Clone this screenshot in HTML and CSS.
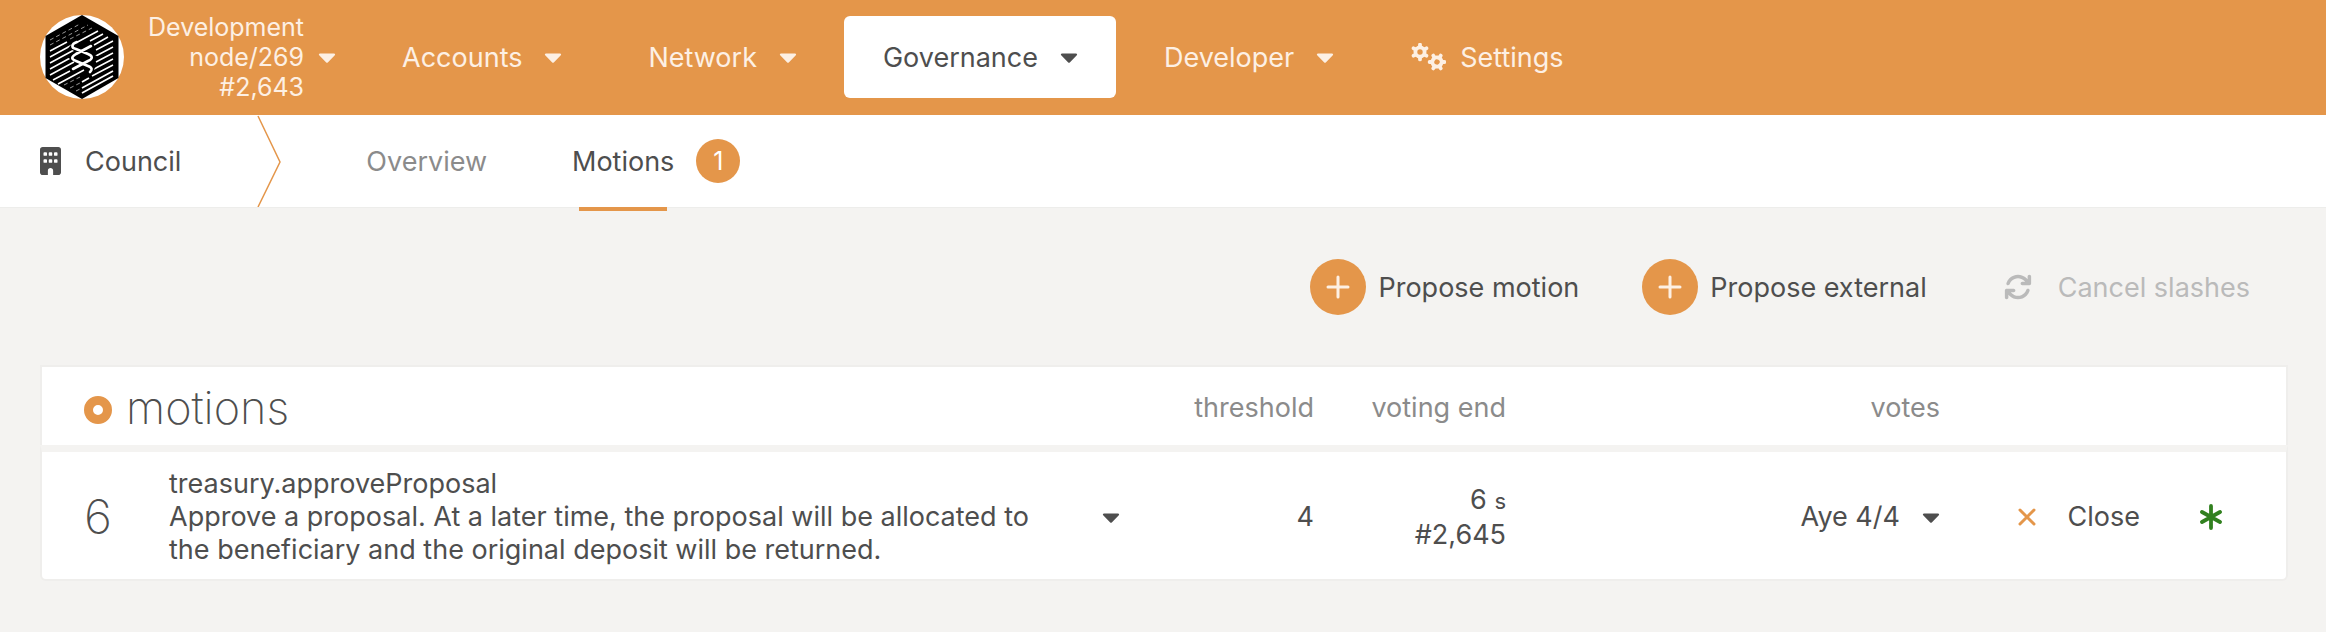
FILE: index.html
```html
<!DOCTYPE html>
<html lang="en">
<head>
<meta charset="utf-8">
<meta name="viewport" content="width=device-width, initial-scale=1">
<title>Council motions</title>
<link rel="stylesheet" href="styles.css">
</head>
<body>
<svg class="defs" aria-hidden="true">
  <symbol id="caret" viewBox="0 0 320 512"><path d="M31.3 192h257.3c17.8 0 26.7 21.5 14.1 34.1L174.1 354.8c-7.8 7.8-20.5 7.8-28.3 0L17.2 226.1C4.6 213.5 13.5 192 31.3 192z"/></symbol>
  <symbol id="plus" viewBox="0 0 24 24"><path d="M12 2v20M2 12h20" fill="none" stroke="currentColor" stroke-width="3" stroke-linecap="round"/></symbol>
</svg>
<header class="topbar">
  <svg class="logo" viewBox="0 0 84 84" role="img" aria-label="Substrate">
    <circle cx="42" cy="42" r="42" fill="#fff"/>
    <path d="M42 0L78.500 21V63L42 84L5.500 63V21z" fill="#000"/>
    <g stroke="#fff" fill="none">
      <path stroke-width="1" stroke-dasharray="4 3" stroke="#999" d="M10 25L40 9M10 30L48 10M30 24L52 13M24 70L40 62M30 73L42 67M36 76L42 73"/>
      <path stroke-width="1.500" d="M32 30L58 16M10 36L27 27M50 26L63 19M10 42L32 30M54 30L68 22M10 48L34 35M56 35L73 26M10 54L32 42M54 42L73 32M10 60L34 47M56 47L73 38M13 65L30 56M54 54L73 44M18 69L44 55M52 61L73 50"/>
      <path stroke-width="1.800" d="M42 67L49 63M42 73L73 56M42 78L73 61"/>
      <path stroke="#000" stroke-width="6" d="M37 27L33 32L52 42L33 53M51 31L33 42L52 52L49 57"/>
      <path stroke-width="2.600" stroke-linecap="round" stroke-linejoin="round" d="M37 27C31 29 31 33 36 34L48 39C53 41 53 44 48 46L33 54M51 31L36 39C31 42 31 44 36 46L48 51C53 53 52 55 50 57"/>
    </g>
  </svg>
  <button class="chain" type="button">
    <span class="chain-text">Development<br>node/269<br>#2,643</span>
    <svg class="caret"><use href="#caret"/></svg>
  </button>
  <nav class="menu">
    <button type="button" class="menu-item">Accounts <svg class="caret"><use href="#caret"/></svg></button>
    <button type="button" class="menu-item">Network <svg class="caret"><use href="#caret"/></svg></button>
    <button type="button" class="menu-item active">Governance <svg class="caret"><use href="#caret"/></svg></button>
    <button type="button" class="menu-item">Developer <svg class="caret"><use href="#caret"/></svg></button>
    <a href="#settings" class="menu-item settings">
      <svg class="gears" viewBox="0 0 35 28">
        <g id="gear" transform="translate(9 9)">
          <path fill-rule="evenodd" d="M-6.500 0a6.500 6.500 0 1 0 13 0a6.500 6.500 0 1 0 -13 0zM-2.700 0a2.700 2.700 0 1 0 5.400 0a2.700 2.700 0 1 0 -5.400 0z"/>
          <path d="M0 -5.500V-7.400M0 5.500V7.400M4.800 -2.800L6.400 -3.700M-4.800 2.800L-6.400 3.700M4.800 2.800L6.400 3.700M-4.800 -2.800L-6.400 -3.700" fill="none" stroke="currentColor" stroke-width="3.800" stroke-linecap="round"/>
        </g>
        <use href="#gear" transform="translate(26 19) rotate(30) translate(-9 -9)"/>
      </svg>
      Settings
    </a>
  </nav>
</header>
<nav class="tabs">
  <div class="section">
    <svg class="building" viewBox="0 0 384 512"><path fill-rule="evenodd" d="M48 0C21.500 0 0 21.500 0 48V464c0 26.500 21.500 48 48 48h96V432c0-26.500 21.500-48 48-48s48 21.500 48 48v80h96c26.500 0 48-21.500 48-48V48c0-26.500-21.500-48-48-48zM64 112q0-16 16-16h32q16 0 16 16v32q0 16-16 16h-32q-16 0-16-16zM160 112q0-16 16-16h32q16 0 16 16v32q0 16-16 16h-32q-16 0-16-16zM256 112q0-16 16-16h32q16 0 16 16v32q0 16-16 16h-32q-16 0-16-16zM64 240q0-16 16-16h32q16 0 16 16v32q0 16-16 16h-32q-16 0-16-16zM160 240q0-16 16-16h32q16 0 16 16v32q0 16-16 16h-32q-16 0-16-16zM256 240q0-16 16-16h32q16 0 16 16v32q0 16-16 16h-32q-16 0-16-16z"/></svg>
    Council
  </div>
  <svg class="divider" viewBox="0 0 24 92"><path d="M1 1L23 47L1 92" fill="none" stroke="#e4964a" stroke-width="1.500"/></svg>
  <a class="tab" href="#overview">Overview</a>
  <a class="tab current" href="#motions"><span>Motions</span><span class="badge">1</span></a>
</nav>
<main class="page">
  <div class="actions">
    <button type="button" class="action"><span class="disc"><svg class="plus"><use href="#plus"/></svg></span>Propose motion</button>
    <button type="button" class="action"><span class="disc"><svg class="plus"><use href="#plus"/></svg></span>Propose external</button>
    <button type="button" class="action off" disabled><svg class="sync" viewBox="0 0 512 512"><path d="M105.1 202.6c7.7-21.8 20.2-42.3 37.8-59.8c62.5-62.5 163.8-62.5 226.3 0L386.3 160H336c-17.7 0-32 14.3-32 32s14.3 32 32 32H463.9c17.7 0 32-14.3 32-32V64c0-17.7-14.3-32-32-32s-32 14.3-32 32v51.2L414.4 97.6c-87.5-87.5-229.3-87.5-316.8 0C73.2 122 55.6 150.7 44.8 181.4c-5.9 16.7 2.9 34.9 19.5 40.8s34.9-2.9 40.8-19.5zM39 289.3c-5 1.5-9.8 4.2-13.7 8.2c-4 4-6.7 8.8-8.1 14c-.3 1.2-.6 2.500-.8 3.800c-.3 1.700-.4 3.400-.4 5.100V448c0 17.700 14.300 32 32 32s32-14.300 32-32V396.900l17.600 17.500c87.500 87.400 229.300 87.400 316.700 0c24.400-24.400 42.100-53.100 52.900-83.700c5.900-16.700-2.900-34.900-19.500-40.800s-34.900 2.900-40.800 19.500c-7.700 21.800-20.200 42.300-37.800 59.800c-62.500 62.500-163.800 62.500-226.300 0L125.600 352H176c17.700 0 32-14.300 32-32s-14.300-32-32-32H48.400c-1.600 0-3.200 .1-4.800 .3s-3.100 .5-4.600 1z"/></svg>Cancel slashes</button>
  </div>
  <table class="motions">
    <colgroup><col class="c-id"><col class="c-text"><col class="c-threshold"><col class="c-end"><col class="c-votes"><col class="c-close"><col class="c-state"></colgroup>
    <thead>
      <tr>
        <th colspan="2" class="title" scope="col"><h1><span class="ring"></span>motions</h1></th>
        <th scope="col">threshold</th>
        <th scope="col">voting end</th>
        <th scope="col">votes</th>
        <td colspan="2"></td>
      </tr>
    </thead>
    <tbody>
      <tr>
        <td class="id">6</td>
        <td class="call">
          <details><summary><span>treasury.approveProposal<br>Approve a proposal. At a later time, the proposal will be allocated to the beneficiary and the original deposit will be returned.</span><svg class="caret"><use href="#caret"/></svg></summary></details>
        </td>
        <td>4</td>
        <td>6 <small>s</small><br>#2,645</td>
        <td><button type="button" class="votes">Aye 4/4 <svg class="caret"><use href="#caret"/></svg></button></td>
        <td><button type="button" class="close"><svg class="cross" viewBox="0 0 18 18"><path d="M2 2L16 16M16 2L2 16" fill="none" stroke="#e4964a" stroke-width="3" stroke-linecap="round"/></svg>Close</button></td>
        <td class="state"><svg class="star" viewBox="0 0 22 26"><path d="M11 2V24M2 8L20 18M20 8L2 18" fill="none" stroke="#31801f" stroke-width="3.800" stroke-linecap="round"/></svg></td>
      </tr>
    </tbody>
  </table>
</main>
</body>
</html>
```
FILE: styles.css
```css
* { box-sizing: border-box; }
body {
  margin: 0;
  background: #f4f3f1;
  color: #4e4e4e;
  font: 27px/33px Inter, "Noto Sans", sans-serif;
}
button {
  border: 0;
  padding: 0;
  background: none;
  color: inherit;
  font: inherit;
}
a { color: inherit; text-decoration: none; }
svg { fill: currentColor; flex: none; }
.defs { display: none; }
.caret { width: 18px; height: 28px; }

.topbar {
  display: flex;
  align-items: center;
  min-height: 115px;
  padding: 0 40px 1px;
  background: #e4964a;
  color: #fdf0e4;
}
.logo { width: 84px; height: 84px; }
.chain {
  display: flex;
  align-items: center;
  gap: 14px;
  margin-left: 24px;
  text-align: right;
  font-size: 25px;
  line-height: 30px;
}
.menu { display: flex; align-items: center; margin-left: 27px; }
.menu-item {
  display: flex;
  align-items: center;
  gap: 22px;
  height: 82px;
  padding: 0 38px 0 39px;
  border-radius: 6px;
  margin-right: 9px;
}
.menu-item.active { background: #fff; color: #4e4e4e; }
.menu .settings { gap: 14px; padding-left: 30px; }
.gears { width: 35px; height: 28px; }

.tabs {
  display: flex;
  min-height: 93px;
  padding: 0 40px;
  background: #fff;
  border-bottom: 1px solid #ededeb;
}
.section { display: flex; align-items: center; gap: 24px; }
.building { width: 21px; height: 28px; }
.divider { width: 24px; height: 92px; margin-left: 76px; }
.tab { display: flex; align-items: center; margin-left: 85px; color: #8b8b8b; }
.current { position: relative; gap: 22px; color: #4e4e4e; }
.current::after {
  content: "";
  position: absolute;
  left: 7px;
  bottom: -4px;
  width: 88px;
  height: 4px;
  background: #e4964a;
}
.badge {
  width: 44px;
  height: 44px;
  border-radius: 50%;
  background: #e4964a;
  color: #fff;
  font-size: 25px;
  line-height: 44px;
  text-align: center;
}

.page { padding: 51px 38px 40px 40px; }
.actions { display: flex; justify-content: flex-end; gap: 63px; padding-right: 38px; }
.action { display: flex; align-items: center; gap: 12px; }
.off { gap: 26px; padding-left: 14px; color: #bababa; }
.disc {
  display: grid;
  place-items: center;
  width: 56px;
  height: 56px;
  border-radius: 50%;
  background: #e4964a;
  color: #fdf0e4;
}
.plus { width: 24px; height: 24px; }
.sync { width: 28px; height: 28px; }

.motions {
  width: 100%;
  margin-top: 50px;
  border-collapse: separate;
  border-spacing: 0;
  table-layout: fixed;
}
.c-id { width: 115px; }
.c-threshold { width: 180px; }
.c-end { width: 192px; }
.c-votes { width: 434px; }
.c-close { width: 208px; }
.c-state { width: 126px; }
.motions th, .motions td { padding: 2px 14px 0; background: #fff; text-align: right; }
.motions thead th, .motions thead td { height: 80px; border-top: 2px solid #efeeec; }
.motions th { color: #8b8b8b; font-weight: 400; }
.motions .title { padding-top: 4px; }
.motions tbody td { height: 136px; border: 0 solid #efeeec; border-top: 7px solid #f4f3f1; border-bottom-width: 2px; }
.motions tr > :first-child { border-left: 2px solid #efeeec; padding-left: 42px; text-align: left; }
.motions tr > :last-child { border-right: 2px solid #efeeec; }
.motions tbody tr > :first-child { border-bottom-left-radius: 6px; }
.motions tbody tr > :last-child { border-bottom-right-radius: 6px; }
.title h1 {
  display: flex;
  align-items: baseline;
  gap: 14px;
  margin: 0;
  color: #4e4e4e;
  font-size: 45px;
  font-weight: 200;
  line-height: 56px;
}
.ring { width: 28px; height: 28px; border: 9px solid #e4964a; border-radius: 50%; }
.motions .id { font-size: 48px; font-weight: 200; }
.motions .call { padding-right: 28px; text-align: left; }
.call summary { display: flex; align-items: center; justify-content: space-between; gap: 48px; list-style: none; }
small { font-size: 22px; }
.votes, .close { display: inline-flex; align-items: center; gap: 22px; }
.close { gap: 32px; }
.cross { width: 18px; height: 18px; }
.star { display: block; width: 22px; height: 26px; margin-left: auto; }
.motions .close { padding-right: 8px; }
.motions .state { padding-right: 64px; }
```
